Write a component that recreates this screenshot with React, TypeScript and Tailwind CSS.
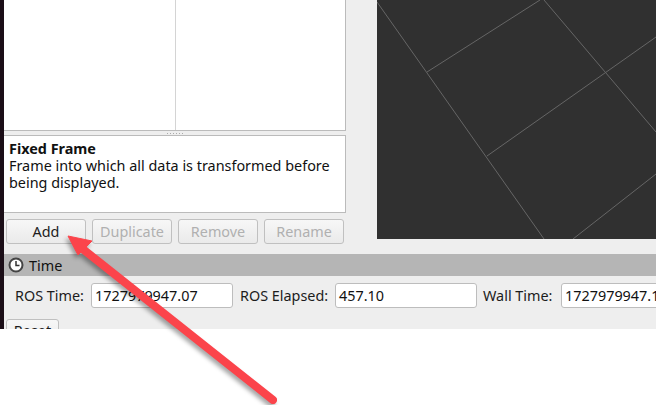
import React from 'react';

const font = { fontFamily: '"Noto Sans", "Open Sans", sans-serif' };

const ToolButton = ({ label, enabled }: { label: string; enabled?: boolean }) => (
  <button
    className={`w-[80px] h-[25px] flex items-center justify-center pt-[2px] rounded-[3px] border border-[#c0c0c0] bg-gradient-to-b from-[#f7f7f7] to-[#eaeaea] text-[14.4px] leading-none ${
      enabled ? 'text-[#1c1c1c]' : 'text-[#b0b0b0]'
    }`}
  >
    {label}
  </button>
);

const TimeField = ({ label, value, labelClass, inputClass }: { label: string; value: string; labelClass: string; inputClass: string }) => (
  <>
    <span className={`shrink-0 pt-[2px] text-[14.4px] leading-none whitespace-nowrap text-[#1c1c1c] ${labelClass}`}>{label}</span>
    <div className={`h-[25px] shrink-0 flex items-center pl-[3px] pt-[1px] bg-white border border-[#bdbdbd] rounded-[3px] text-[14.4px] whitespace-nowrap overflow-hidden text-[#111] ${inputClass}`}>
      {value}
    </div>
  </>
);

export default function App() {
  return (
    <div className="relative w-[656px] h-[405px] bg-white overflow-hidden" style={font}>
      <div className="flex h-[329px] overflow-hidden">
        <div className="w-[4px] shrink-0 bg-[#1b0e17]" />
        <div className="flex-1 min-w-0 flex flex-col bg-[#eeeeee]">
          <div className="flex h-[254px] shrink-0">
            <div className="w-[342px] shrink-0 flex flex-col">
              <div className="h-[131px] flex bg-white border-r border-b border-[#bbbbbb]">
                <div className="w-[172px] border-r border-[#d4d4d4]" />
              </div>
              <div className="h-[4px] flex items-center justify-center gap-[2px]">
                {[0, 1, 2, 3, 4, 5].map(i => (
                  <span key={i} className="w-[1px] h-[1px] bg-[#aaaaaa]" />
                ))}
              </div>
              <div className="h-[78px] bg-white border-t border-r border-b border-[#bbbbbb] pl-[5px] pt-[4px] text-[14.4px] leading-[17px] text-[#111]">
                <div className="font-bold">Fixed Frame</div>
                <div>Frame into which all data is transformed before being displayed.</div>
              </div>
              <div className="flex gap-[6px] pl-[2px] pt-[6px]">
                <ToolButton label="Add" enabled />
                <ToolButton label="Duplicate" />
                <ToolButton label="Remove" />
                <ToolButton label="Rename" />
              </div>
            </div>
            <div className="ml-[31px] flex-1 h-[239px] bg-[#303030]">
              <svg width="279" height="239" viewBox="377 0 279 239" className="block">
                <g stroke="#666666" strokeWidth="1" fill="none">
                  <path d="M377 2L544 239" />
                  <path d="M427 72L540 0" />
                  <path d="M544 0L656 132" />
                  <path d="M487 156L656 37" />
                  <path d="M573 239L656 174" />
                </g>
              </svg>
            </div>
          </div>
          <div className="h-[22px] shrink-0 flex items-center gap-[5px] pl-[4px] bg-[#b5b5b5] text-[14.4px] text-[#111]">
            <svg width="16" height="16" viewBox="0 0 16 16">
              <circle cx="8" cy="8" r="6.5" fill="#ffffff" stroke="#444444" strokeWidth="2" />
              <path d="M8 4V8.5H11.5" fill="none" stroke="#333333" strokeWidth="1.5" />
            </svg>
            <span className="pt-[2px]">Time</span>
          </div>
          <div className="flex items-center h-[25px] mt-[7px] shrink-0 pl-[11px]">
            <TimeField label="ROS Time:" value="1727979947.07" labelClass="w-[76px]" inputClass="w-[142px]" />
            <TimeField label="ROS Elapsed:" value="457.10" labelClass="w-[95px] ml-[7px]" inputClass="w-[142px]" />
            <TimeField label="Wall Time:" value="1727979947.12" labelClass="w-[78px] ml-[6px]" inputClass="w-[142px]" />
          </div>
          <div className="pl-[2px] mt-[11px]">
            <button className="w-[53px] h-[25px] flex items-center justify-center rounded-[3px] border border-[#c0c0c0] bg-gradient-to-b from-[#f7f7f7] to-[#eaeaea] text-[14.4px] leading-none text-[#1c1c1c]">
              Reset
            </button>
          </div>
        </div>
      </div>
      {/* annotation arrow on top of the screenshot */}
      <svg
        width="656"
        height="405"
        viewBox="0 0 656 405"
        className="absolute inset-0 pointer-events-none [filter:drop-shadow(-2px_3px_2px_rgba(0,0,0,0.35))]"
      >
        <path d="M273 400L84 250" fill="none" stroke="#fb444b" strokeWidth="8" strokeLinecap="round" />
        <path d="M68 236L92 241L78 255Z" fill="#fb444b" stroke="#fb444b" strokeWidth="1" strokeLinejoin="round" />
      </svg>
    </div>
  );
}
